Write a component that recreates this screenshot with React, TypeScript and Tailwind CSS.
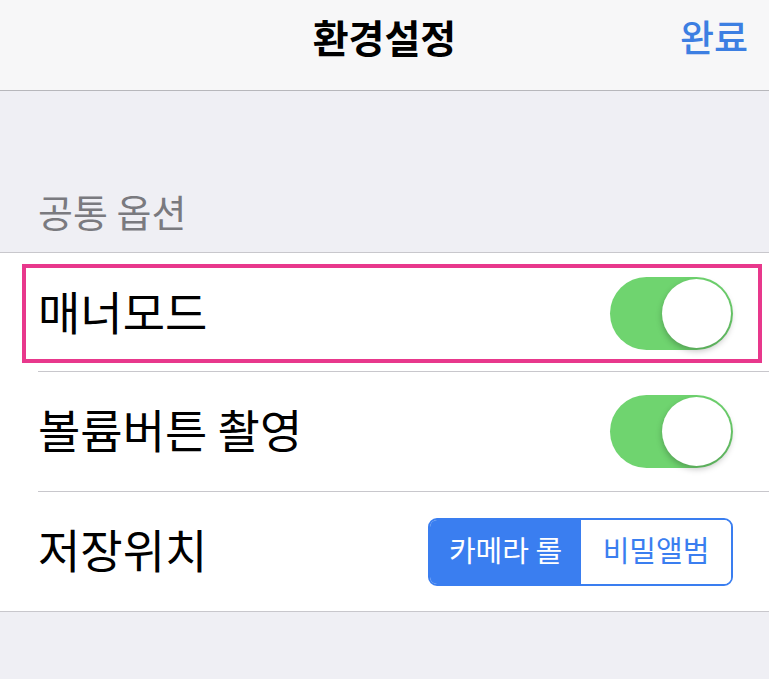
import React from "react";

function Toggle() {
  return (
    <div className="relative h-[73px] w-[123px] rounded-full bg-[#6fd46f]">
      <div className="absolute right-[2px] top-[2px] h-[69px] w-[69px] rounded-full bg-white shadow-[0_3px_6px_rgba(0,0,0,0.25)]" />
    </div>
  );
}

export default function App() {
  return (
    <div className="h-[679px] w-[769px] overflow-hidden bg-[#efeff4] font-['Noto_Sans_CJK_KR','Noto_Sans',sans-serif] text-black">
      <header className="grid h-[91px] grid-cols-[1fr_auto_1fr] items-center border-b border-[#b7b7bb] bg-[#f7f7f8] px-[21px] pb-[18px]">
        <div />
        <div className="text-[39px] font-bold leading-none">환경설정</div>
        <div className="justify-self-end text-[37px] font-medium leading-none text-[#3d7fe2]">완료</div>
      </header>
      <div className="flex h-[161px] items-end px-[38px] pb-[22px]">
        <span className="text-[38px] leading-none text-[#7a7a7f]">공통 옵션</span>
      </div>
      <div className="border-y border-[#c8c7cc] bg-white">
        <div className="h-[118px] pb-[8px] pl-[22px] pr-[7px] pt-[11px]">
          <div className="flex h-full items-center justify-between border-[4px] border-[#e8388c] pl-[12px] pr-[25px]">
            <span className="mb-[8px] text-[46px] leading-none">매너모드</span>
            <Toggle />
          </div>
        </div>
        <div className="ml-[38px] flex h-[120px] items-center justify-between border-t border-[#c8c7cc] pr-[36px]">
          <span className="mb-[8px] text-[46px] leading-none">볼륨버튼 촬영</span>
          <Toggle />
        </div>
        <div className="ml-[38px] flex h-[120px] items-center justify-between border-t border-[#c8c7cc] pr-[36px]">
          <span className="mb-[8px] text-[46px] leading-none">저장위치</span>
          <div className="flex h-[68px] w-[305px] overflow-hidden rounded-[9px] border-2 border-[#3a7ef0] text-[29px]">
            <div className="flex w-[151px] items-center justify-center bg-[#3a7ef0] pb-[3px] text-white">카메라 롤</div>
            <div className="flex flex-1 items-center justify-center bg-white pb-[3px] text-[#3a7ef0]">비밀앨범</div>
          </div>
        </div>
      </div>
    </div>
  );
}
